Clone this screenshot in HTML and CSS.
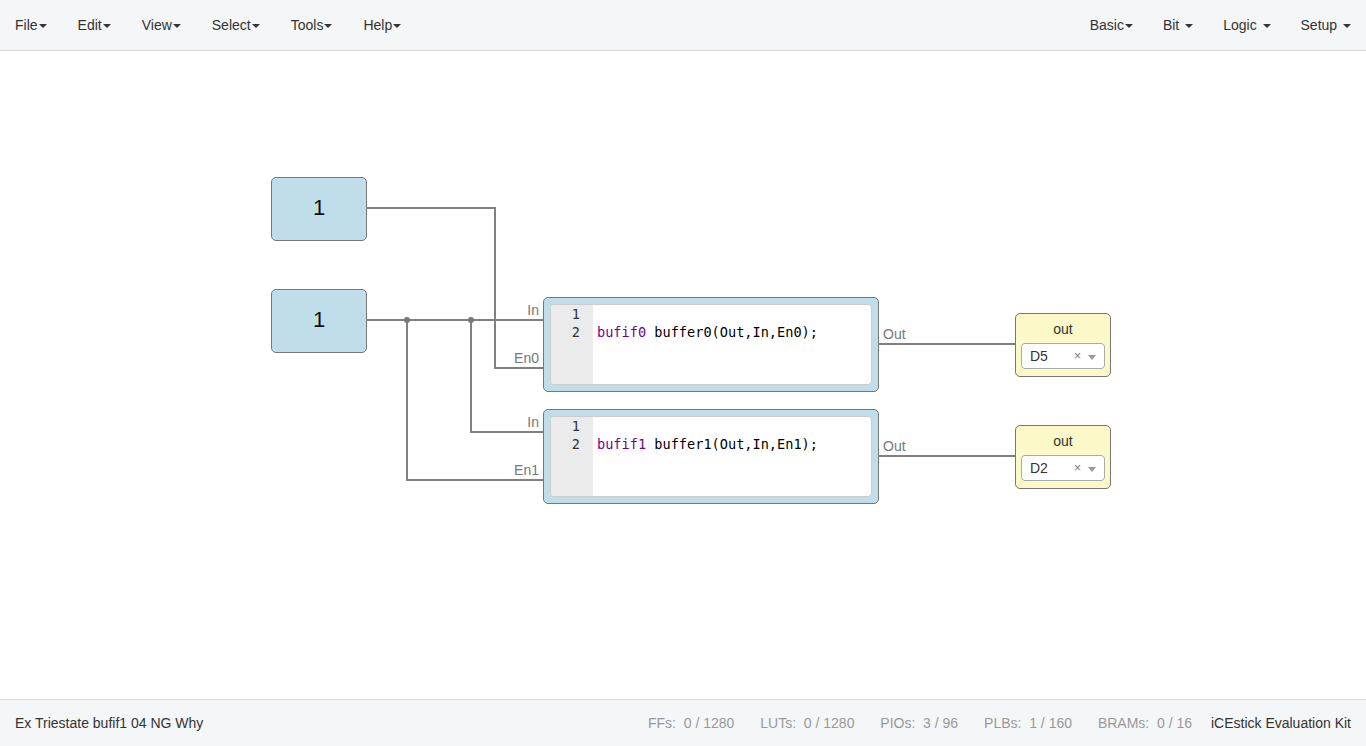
FILE: index.html
```html
<!DOCTYPE html>
<html lang="en">
<head>
    <meta charset="UTF-8">
    <title>Icestudio</title>
    <link rel="stylesheet" href="styles.css">
</head>
<body>
<div class="app">
    <div class="navbar">
        <ul class="menu">
            <li>File<span class="caret tight"></span></li>
            <li>Edit<span class="caret tight"></span></li>
            <li>View<span class="caret tight"></span></li>
            <li>Select<span class="caret tight"></span></li>
            <li>Tools<span class="caret tight"></span></li>
            <li>Help<span class="caret tight"></span></li>
        </ul>
        <ul class="menu">
            <li>Basic<span class="caret tight"></span></li>
            <li>Bit <span class="caret"></span></li>
            <li>Logic <span class="caret"></span></li>
            <li>Setup <span class="caret"></span></li>
        </ul>
    </div>

    <div class="canvas">
        <svg class="wires" width="1366" height="648">
            <g fill="none" stroke="#808080" stroke-width="2">
                <polyline points="366,157 495,157 495,317 543,317"/>
                <polyline points="366,269 543,269"/>
                <polyline points="471,269 471,381 543,381"/>
                <polyline points="407,269 407,429 543,429"/>
                <polyline points="878,293 1015,293"/>
                <polyline points="878,405 1015,405"/>
            </g>
            <circle cx="407" cy="269" r="3" fill="#777"/>
            <circle cx="471" cy="269" r="3" fill="#777"/>
        </svg>

        <div class="const" style="left:271px;top:126px">1</div>
        <div class="const" style="left:271px;top:238px">1</div>

        <div class="port" style="left:500px;top:251px">In</div>
        <div class="port" style="left:500px;top:299px">En0</div>
        <div class="port" style="left:500px;top:363px">In</div>
        <div class="port" style="left:500px;top:411px">En1</div>
        <div class="port out" style="left:883px;top:275px">Out</div>
        <div class="port out" style="left:883px;top:387px">Out</div>

        <div class="code" style="left:543px;top:246px">
            <div class="editor">
                <div class="gutter"><div>1</div><div>2</div></div>
                <div class="lines"><div>&nbsp;</div><div><span class="kw">bufif0</span> buffer0(Out,In,En0);</div></div>
            </div>
        </div>
        <div class="code" style="left:543px;top:358px">
            <div class="editor">
                <div class="gutter"><div>1</div><div>2</div></div>
                <div class="lines"><div>&nbsp;</div><div><span class="kw">bufif1</span> buffer1(Out,In,En1);</div></div>
            </div>
        </div>

        <div class="output" style="left:1015px;top:262px">
            <div class="name">out</div>
            <div class="select"><span>D5</span><span class="clear">×</span><span class="arrow"></span></div>
        </div>
        <div class="output" style="left:1015px;top:374px">
            <div class="name">out</div>
            <div class="select"><span>D2</span><span class="clear">×</span><span class="arrow"></span></div>
        </div>
    </div>

    <div class="footer">
        <div class="title">Ex Triestate bufif1 04 NG Why</div>
        <div class="stats">
            <span>FFs:&nbsp; 0 / 1280</span>
            <span>LUTs:&nbsp; 0 / 1280</span>
            <span>PIOs:&nbsp; 3 / 96</span>
            <span>PLBs:&nbsp; 1 / 160</span>
            <span>BRAMs:&nbsp; 0 / 16</span>
            <span class="board">iCEstick Evaluation Kit</span>
        </div>
    </div>
</div>
</body>
</html>
```

FILE: styles.css
```css
* {
    box-sizing: border-box;
}

body {
    margin: 0;
    font-family: "Liberation Sans", Arial, sans-serif;
    font-size: 14px;
    color: #333;
    background: #fff;
}

.app {
    display: flex;
    flex-direction: column;
    height: 746px;
}

.navbar {
    display: flex;
    justify-content: space-between;
    height: 51px;
    background: #f5f6f7;
    border-bottom: 1px solid #d9dcde;
}

.menu {
    display: flex;
    list-style: none;
    margin: 0;
    padding: 0;
}

.menu li {
    padding: 0 15px;
    line-height: 50px;
    color: #333;
}

.menu:first-child li {
    padding-right: 16px;
}

.caret {
    display: inline-block;
    width: 0;
    height: 0;
    margin-left: 2px;
    vertical-align: middle;
    border-top: 4px solid #333;
    border-left: 4px solid transparent;
    border-right: 4px solid transparent;
}

.caret.tight {
    margin-left: 1px;
}

.canvas {
    position: relative;
    flex: 1;
}

.wires {
    position: absolute;
    left: 0;
    top: 0;
}

.const {
    position: absolute;
    width: 96px;
    height: 64px;
    background: #c0deea;
    border: 1px solid #777;
    border-radius: 5px;
    font-size: 22px;
    color: #111;
    display: flex;
    align-items: center;
    justify-content: center;
    padding-bottom: 2px;
}

.port {
    position: absolute;
    width: 39px;
    text-align: right;
    font-size: 14px;
    color: #777;
}

.port.out {
    text-align: left;
}

.code {
    position: absolute;
    width: 336px;
    height: 95px;
    background: #c0deea;
    border: 1px solid #777;
    border-radius: 5px;
    padding: 6px 6px 6px 6px;
}

.editor {
    display: flex;
    height: 100%;
    background: #fff;
    border: 1px solid #ccc;
    border-radius: 4px;
    overflow: hidden;
    font-family: "DejaVu Sans Mono", "Liberation Mono", monospace;
    font-size: 13.6px;
    line-height: 18px;
}

.gutter {
    width: 42px;
    background: #ebebeb;
    padding: 0 13px 0 0;
    text-align: right;
    color: #333;
}

.lines {
    padding: 0 0 0 4px;
    color: #000;
    white-space: pre;
}

.kw {
    color: #708;
}

.output {
    position: absolute;
    width: 96px;
    height: 64px;
    background: #fbf9c8;
    border: 1px solid #777;
    border-radius: 5px;
    padding: 5px 5px 0 5px;
}

.name {
    text-align: center;
    line-height: 20px;
    color: #333;
}

.select {
    display: flex;
    align-items: center;
    height: 26px;
    margin-top: 4px;
    background: #fff;
    border: 1px solid #aaa;
    border-radius: 4px;
    padding: 0 8px;
    font-size: 14px;
    color: #333;
}

.select span:first-child {
    flex: 1;
}

.clear {
    font-size: 12px;
    color: #777;
    margin-right: 7px;
}

.arrow {
    width: 0;
    height: 0;
    border-top: 5px solid #999;
    border-left: 4px solid transparent;
    border-right: 4px solid transparent;
    margin-top: 2px;
}

.footer {
    display: flex;
    justify-content: space-between;
    align-items: center;
    height: 47px;
    background: #f5f6f7;
    border-top: 1px solid #d9dcde;
    padding: 0 15px;
}

.stats span {
    margin-left: 22px;
    color: #999;
}

.stats .board {
    margin-left: 15px;
    color: #333;
}
```
